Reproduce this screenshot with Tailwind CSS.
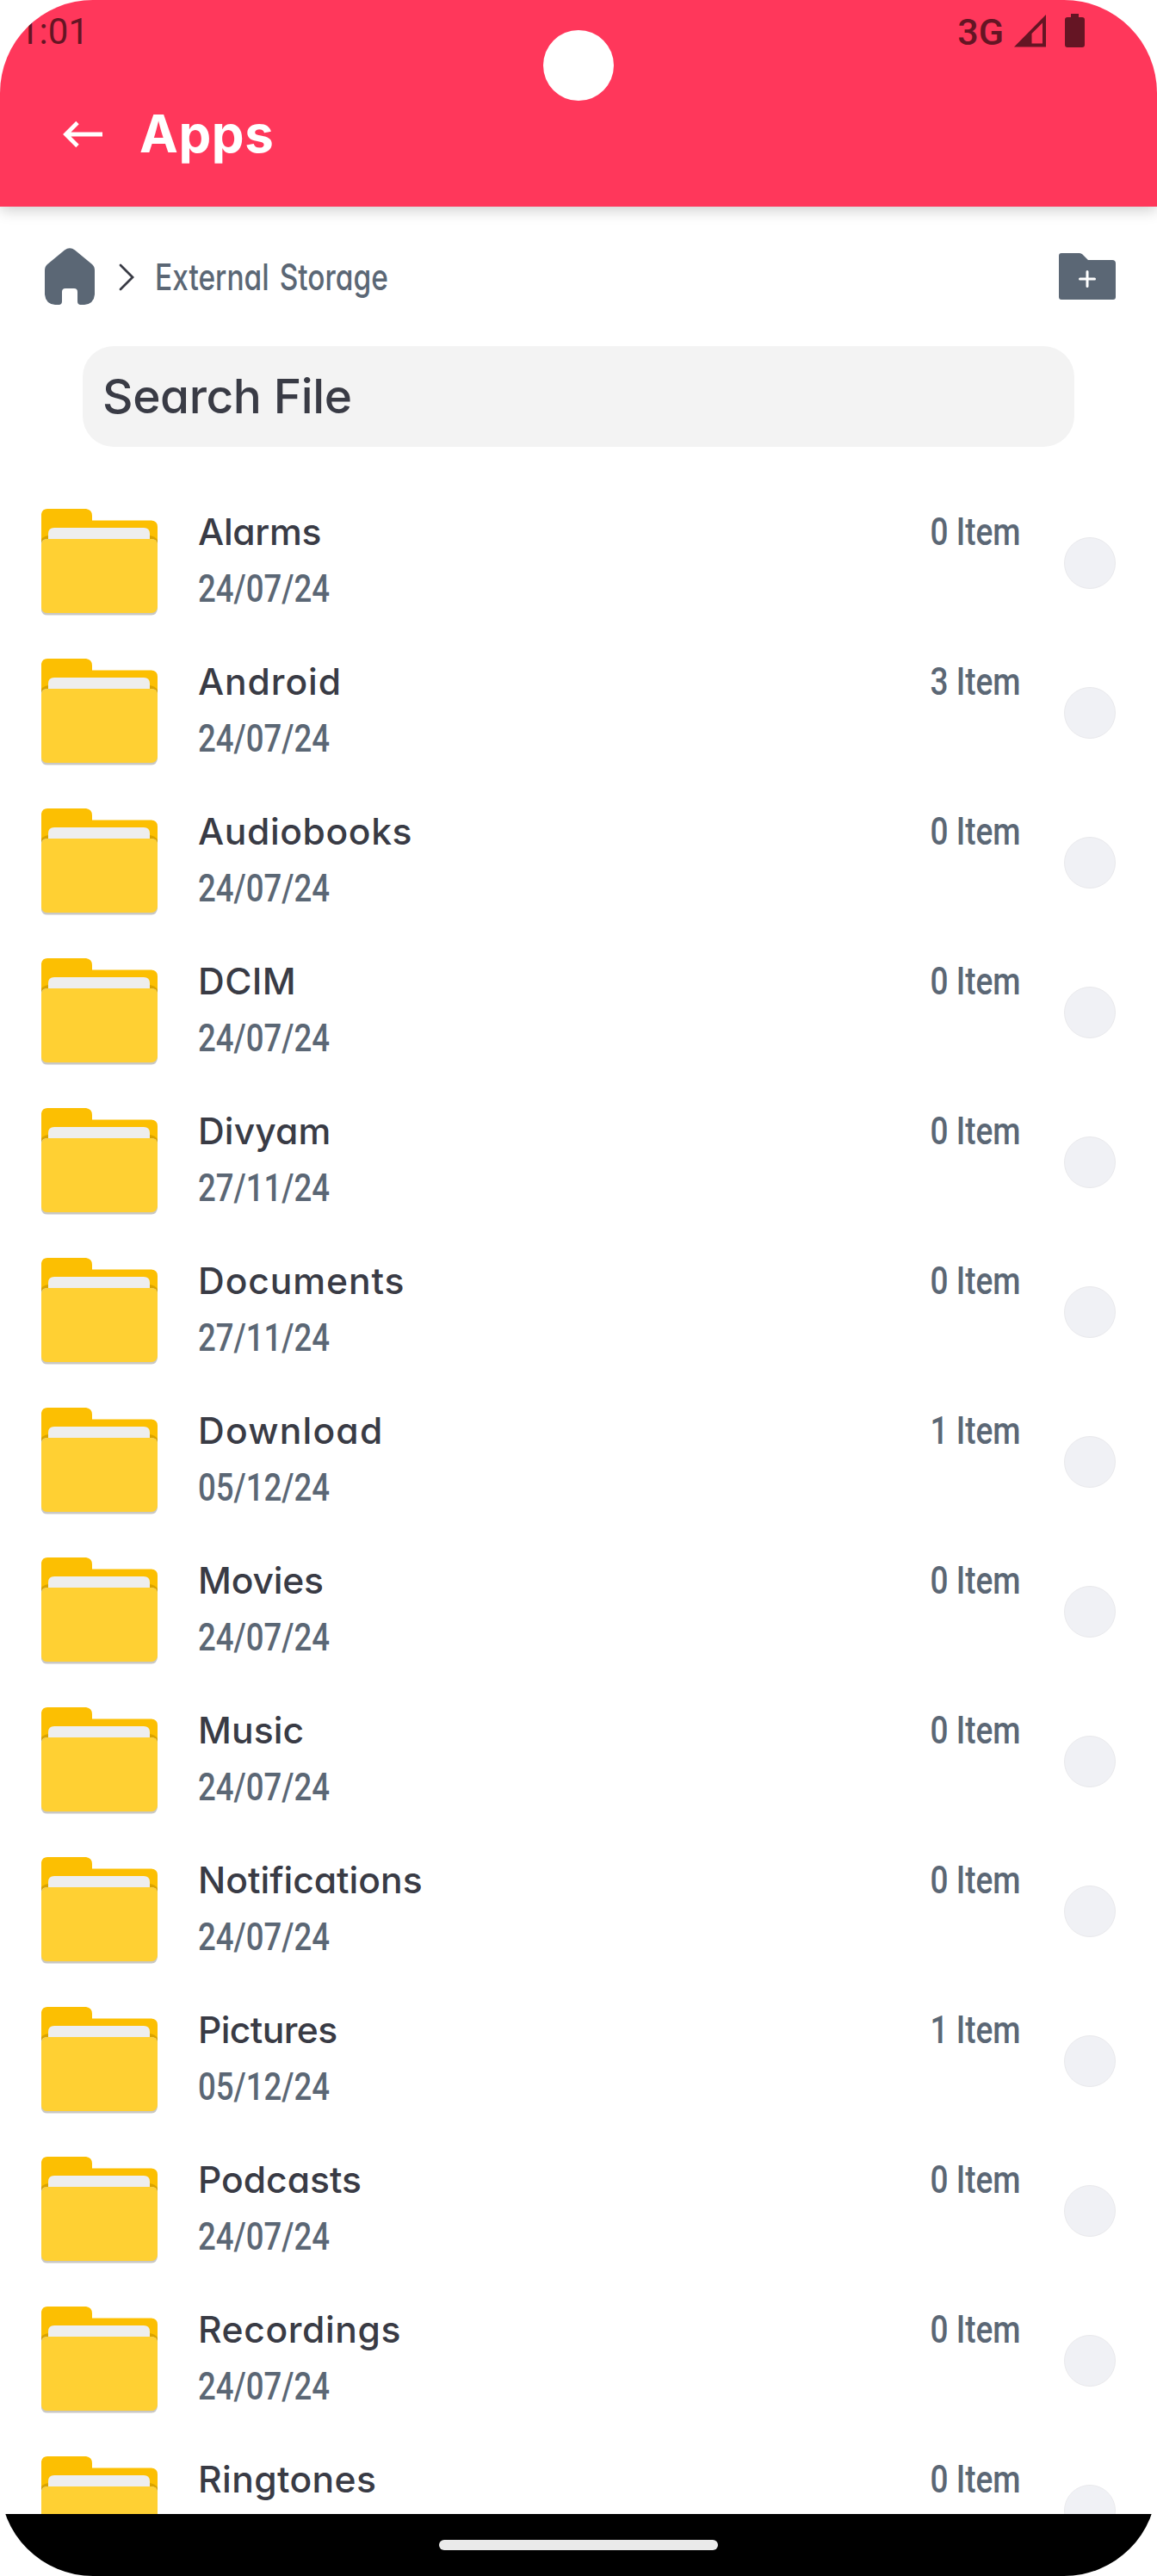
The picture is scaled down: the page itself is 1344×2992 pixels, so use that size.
<!DOCTYPE html>
<html lang="en">
<head>
<meta charset="utf-8">
<title>Apps</title>
<script src="https://cdn.jsdelivr.net/npm/@tailwindcss/browser@4"></script>
</head>
<body class="bg-white">
<svg class="hidden">
  <symbol id="folder" viewBox="0 0 136 126">
    <path d="M0 30V6Q1 0 7 0H52Q59 1 59 8V13.500H128Q135 14 135 21V60H0Z" fill="#fcbf02"/>
    <path d="M0 40V35Q4 31 10 31H126Q132 32 135 36V42Z" fill="#d9a300"/>
    <path d="M8 40V29Q8 22 15 22H119Q126 22 126 29V40Z" fill="#eeeeee"/>
    <path d="M0 112V40Q1 35 7 35H128Q134 35 135 41V116Q134 123.500 128 123.500H7Q1 123.500 0 118Z" fill="#c9c8c4"/>
    <path d="M0 112V41Q1 35 7 35H128Q134 35 135 41V114Q134 121 128 121H7Q1 121 0 115Z" fill="#ffd033"/>
  </symbol>
</svg>
<div class="relative flex h-[2992px] w-[1344px] flex-col overflow-hidden rounded-[108px] bg-white font-['Inter',sans-serif] text-[#393b45] [font-feature-settings:'cv11']">
  <header class="z-10 flex h-[240px] shrink-0 flex-col bg-[#ff375b] shadow-[0_4px_16px_rgba(0,0,0,0.2)]">
    <div class="flex h-[72px] items-start justify-between pl-[22px] pr-[84px] font-['Roboto',sans-serif] text-[42px] text-[#651524]">
      <span class="mt-[12px] leading-[50px]">1:01</span>
      <div class="flex items-start">
        <span class="mr-[12px] mt-[12px] text-[43px] font-medium leading-[50px]">3G</span>
        <svg class="mr-[21px] mt-[17px] h-[38px] w-[38px]" viewBox="0 0 38 38"><path fill-rule="evenodd" fill="currentColor" d="M0 37.500L37 0V37.500ZM20.500 22V33.500H33V9.500Z"/></svg>
        <svg class="mt-[16px] h-[39px] w-[23px]" viewBox="0 0 23 39"><path fill="currentColor" d="M7 0H16V4H20Q23 4 23 7V36Q23 39 20 39H3Q0 39 0 36V7Q0 4 3 4H7Z"/></svg>
      </div>
    </div>
    <div class="flex h-[168px] items-start pl-[73px] text-white">
      <svg class="mt-[68px] h-[32px] w-[46px]" viewBox="0 0 46 32"><path d="M17 2.500L3.500 16L17 29.500M3.500 16H46" fill="none" stroke="currentColor" stroke-width="4.800"/></svg>
      <h1 class="ml-[43px] mt-[48px] text-[60px] font-bold leading-[70px] tracking-[0.6px]">Apps</h1>
    </div>
  </header>
  <div class="absolute left-[631px] top-[35px] z-20 size-[82px] rounded-full bg-white"></div>

  <nav class="flex h-[162px] shrink-0 items-start pl-[52px] pr-[48px] text-[#5b6775]">
    <svg class="mt-[48px] h-[66px] w-[58px]" viewBox="0 0 58 66"><path fill="currentColor" d="M23 2.500Q29-2 35 2.500L55 19Q58 21.500 58 26V54Q57 65 46 66H41Q38 65.500 38 62V51Q38 47 34 47H24Q20 47 20 51V62Q20 65.500 17 66H12Q1 65 0 54V26Q0 21.500 3 19Z"/></svg>
    <svg class="ml-[28px] mt-[66px] h-[32px] w-[18px] text-[#393b45]" viewBox="0 0 18 32"><path d="M2 2L16 16L2 30" fill="none" stroke="currentColor" stroke-width="2.800" stroke-linecap="round"/></svg>
    <span class="ml-[24px] mt-[58px] origin-left scale-x-[0.785] whitespace-nowrap text-[42.600px] font-medium leading-[47px] [word-spacing:4px]">External Storage</span>
    <svg class="ml-auto mt-[54px] h-[54px] w-[66px]" viewBox="0 0 66 54"><path fill="currentColor" d="M3 0H24Q26 0 27.500 1.500L34 8H62Q66 8 66 12V51Q66 54 63 54H3Q0 54 0 51V3Q0 0 3 0Z"/><path d="M33 21.500V38.500M24.500 30H41.500" stroke="#fff" stroke-width="3" stroke-linecap="round"/></svg>
  </nav>

  <div class="mx-[96px] flex h-[117px] shrink-0 items-start rounded-[36px] bg-[#f3f3f3] pl-[23px] pt-[23px] text-[55px] font-[450] leading-[70px] tracking-[-0.4px]">Search File</div>

  <main id="list" class="mt-[47px] flex h-[2354px] flex-col overflow-hidden"></main>

  <footer class="flex h-[72px] shrink-0 justify-center bg-black pt-[30px]">
    <div class="h-[12px] w-[324px] rounded-full bg-[#eaeaea]"></div>
  </footer>
</div>
<script>
// name, modified date, item count, letter spacing of the name in px
const folders = [
  ['Alarms', '24/07/24', 0, -0.3], ['Android', '24/07/24', 3, 0.9], ['Audiobooks', '24/07/24', 0, 0.6],
  ['DCIM', '24/07/24', 0, 0.4], ['Divyam', '27/11/24', 0, 0.1], ['Documents', '27/11/24', 0, 0.9],
  ['Download', '05/12/24', 1, 1.2], ['Movies', '24/07/24', 0, -0.2], ['Music', '24/07/24', 0, 0.1],
  ['Notifications', '24/07/24', 0, 0], ['Pictures', '05/12/24', 1, -0.6], ['Podcasts', '24/07/24', 0, 0],
  ['Recordings', '24/07/24', 0, 0.6], ['Ringtones', '24/07/24', 0, 0.4]
];
document.getElementById('list').innerHTML = folders.map(([name, date, count, spacing], i) => `
  <div class="flex ${i === folders.length - 1 ? 'h-[92px]' : 'h-[174px]'} shrink-0 items-start overflow-hidden pl-[48px] pr-[48px] leading-[65px]">
    <svg class="mt-[25px] h-[126px] w-[136px] shrink-0"><use href="#folder"/></svg>
    <div class="ml-[46px] mt-[19px] flex flex-col items-start">
      <span class="text-[42.600px] font-[450]" style="letter-spacing:${spacing}px">${name}</span>
      ${i === folders.length - 1 ? '' : `<span class="origin-left scale-x-[0.84] font-['Roboto',sans-serif] text-[43.500px] font-medium leading-[69px] text-[#5b6775]">${date}</span>`}
    </div>
    <span class="ml-auto mt-[18px] origin-right scale-x-[0.85] font-['Roboto',sans-serif] text-[43.500px] font-medium leading-[69px] text-[#5b6775]">${count} Item</span>
    <div class="ml-[50px] mt-[58px] size-[60px] shrink-0 rounded-full border border-[#e9e9ec] bg-[#f0f1f5]"></div>
  </div>`).join('');
</script>
</body>
</html>
